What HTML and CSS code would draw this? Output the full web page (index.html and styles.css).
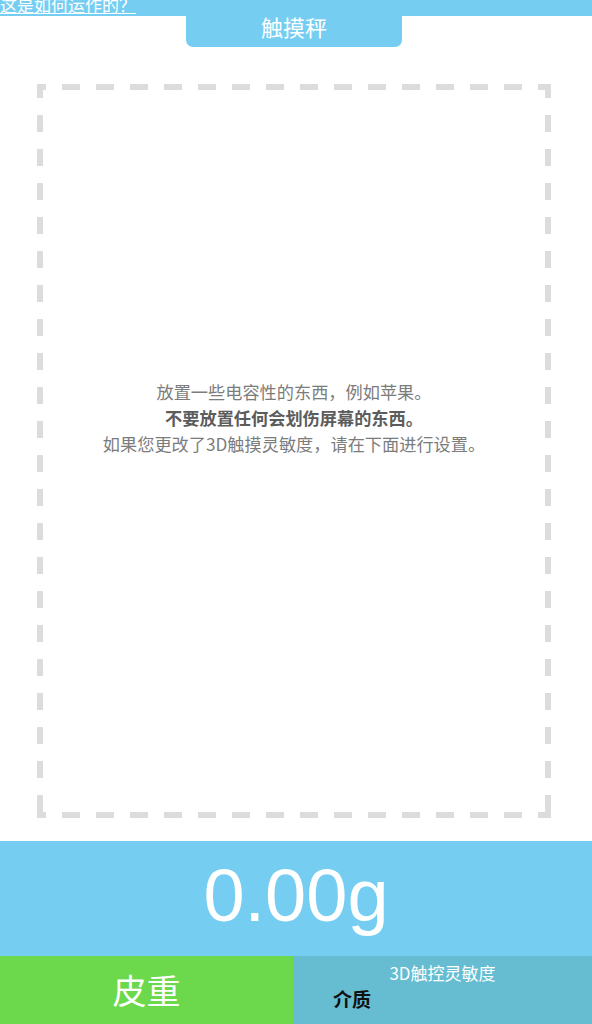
FILE: index.html
```html
<!DOCTYPE html>
<html lang="zh-CN">
<head>
<meta charset="utf-8">
<title>触摸秤</title>
<link rel="stylesheet" href="styles.css">
</head>
<body>
<div class="page">
  <header class="header">
    <div class="strip strip-left"><a class="how" href="#">这是如何运作的？</a></div>
    <div class="tab">触摸秤</div>
    <div class="strip"></div>
  </header>
  <main class="stage">
    <div class="pad">
      <p class="hint">放置一些电容性的东西，例如苹果。</p>
      <p class="hint strong">不要放置任何会划伤屏幕的东西。</p>
      <p class="hint">如果您更改了3D触摸灵敏度，请在下面进行设置。</p>
    </div>
  </main>
  <section class="display">0.00g</section>
  <footer class="controls">
    <button class="tare">皮重</button>
    <div class="sens">
      <div class="sens-title">3D触控灵敏度</div>
      <div class="sens-value">介质</div>
    </div>
  </footer>
</div>
</body>
</html>
```
FILE: styles.css
```css
html, body {
  margin: 0;
  padding: 0;
  background: #ffffff;
}
body {
  font-family: "Noto Sans CJK SC", "Noto Sans", sans-serif;
}
.page {
  width: 592px;
  height: 1024px;
  display: flex;
  flex-direction: column;
  overflow: hidden;
}
.header {
  display: grid;
  grid-template-columns: 186px 216px 1fr;
  height: 47px;
  flex: none;
}
.strip {
  background: linear-gradient(#75cef2 16px, transparent 16px);
}
.how {
  display: block;
  color: #ffffff;
  font-size: 17px;
  line-height: 17px;
  margin-top: -4px;
  text-decoration: underline;
  text-underline-offset: 1px;
  white-space: nowrap;
}
.tab {
  background: #75cef2;
  border-radius: 0 0 7px 7px;
  color: #ffffff;
  font-size: 22px;
  line-height: 26px;
  text-align: center;
  padding-top: 13px;
  box-sizing: border-box;
}
.stage {
  flex: 1;
  padding: 37px 41px 23px 37px;
  display: flex;
}
.pad {
  --dash: #dcdcdc;
  flex: 1;
  display: flex;
  flex-direction: column;
  align-items: center;
  padding-top: 295px;
  background:
    repeating-linear-gradient(to right, var(--dash) 0 9px, transparent 9px 25px, var(--dash) 25px 34px) top left / 100% 6px no-repeat,
    repeating-linear-gradient(to right, var(--dash) 0 9px, transparent 9px 25px, var(--dash) 25px 34px) bottom left / 100% 6px no-repeat,
    repeating-linear-gradient(to bottom, var(--dash) 0 14px, transparent 14px 31px, var(--dash) 31px 34px) top left / 6px 100% no-repeat,
    repeating-linear-gradient(to bottom, var(--dash) 0 14px, transparent 14px 31px, var(--dash) 31px 34px) top right / 6px 100% no-repeat;
}
.hint {
  margin: 0;
  font-size: 17.2px;
  line-height: 26px;
  color: #7c7c7c;
  text-align: center;
}
.hint.strong {
  font-weight: bold;
  color: #5c5c5c;
}
.display {
  flex: none;
  height: 115px;
  background: #75cef2;
  color: #ffffff;
  font-family: "Liberation Sans", Arial, sans-serif;
  font-size: 74px;
  line-height: 110px;
  text-align: center;
}
.controls {
  flex: none;
  height: 68px;
  display: grid;
  grid-template-columns: 293px 1fr;
}
.tare {
  border: none;
  margin: 0;
  padding: 0;
  background: #6bd94b;
  color: #ffffff;
  font-family: "Noto Sans CJK SC", sans-serif;
  font-size: 34px;
  line-height: 68px;
  text-align: center;
}
.sens {
  background: #66bdd2;
  display: flex;
  flex-direction: column;
  padding-top: 5px;
}
.sens-title {
  color: #ffffff;
  font-size: 17px;
  line-height: 24px;
  text-align: center;
}
.sens-value {
  color: #111111;
  font-size: 19px;
  font-weight: bold;
  line-height: 28px;
  padding-left: 40px;
}
```
